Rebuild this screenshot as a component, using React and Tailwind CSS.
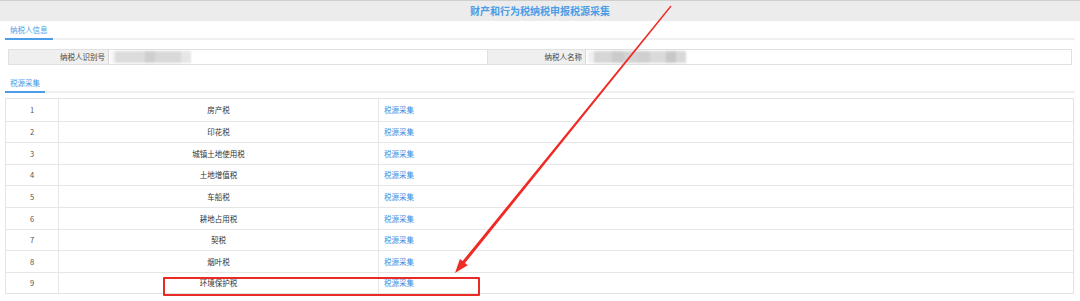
import React from 'react';

const taxes = [
  '房产税',
  '印花税',
  '城镇土地使用税',
  '土地增值税',
  '车船税',
  '耕地占用税',
  '契税',
  '烟叶税',
  '环境保护税'
];

const font = { fontFamily: '"Noto Sans CJK SC", "Noto Sans", sans-serif' };

function Tab({ label, height }) {
  return (
    <div className={`flex items-end border-b-2 border-[#f0f0f0] ${height}`}>
      <div className="-mb-[2px] border-b-2 border-[#4a9de6] px-[5px] pb-[3px] text-[7.5px] leading-[10px] text-[#4a9de6]">
        {label}
      </div>
    </div>
  );
}

function Blur({ width, tones }) {
  return (
    <div className="flex h-full items-center pl-[2px]" style={{ width }}>
      <div className="flex h-[12px] blur-[1px]">
        {tones.map((t, i) => (
          <div key={i} className="h-full" style={{ width: t[0], background: t[1] }} />
        ))}
      </div>
    </div>
  );
}

export default function App() {
  return (
    <div className="relative h-[301px] w-[1080px] overflow-hidden bg-white text-[#444]" style={font}>
      {/* Header */}
      <div className="flex h-[21px] items-center justify-center border-t border-[#cfcfcf] bg-[#ececec]">
        <span className="text-[10px] font-bold leading-none text-[#4a9de6]">财产和行为税纳税申报税源采集</span>
      </div>

      <div className="mx-[5px]">
        <Tab label="纳税人信息" height="h-[19px]" />

        {/* Taxpayer info */}
        <div className="mx-[3px] mt-[9px] grid h-[16px] grid-cols-[99px_379px_98px_1fr] border border-[#e0e0e0] text-[7.5px] leading-none">
          <div className="flex items-center justify-end bg-[#efefef] pr-[3px]">纳税人识别号</div>
          <div className="flex items-center border-l border-[#d8d8d8]">
            <Blur width={100} tones={[[4, '#f3f3f3'], [30, '#dcdcdc'], [10, '#cfcfcf'], [26, '#d9d9d9'], [10, '#e6e6e6']]} />
          </div>
          <div className="flex items-center justify-end border-l border-[#e0e0e0] bg-[#efefef] pr-[3px]">纳税人名称</div>
          <div className="flex items-center border-l border-[#d8d8d8]">
            <Blur width={120} tones={[[6, '#f0f0f0'], [18, '#d6d6d6'], [12, '#cbcbcb'], [14, '#d3d3d3'], [12, '#cfcfcf'], [16, '#dadada'], [10, '#c8c8c8'], [10, '#d9d9d9']]} />
          </div>
        </div>

        <Tab label="税源采集" height="h-[28px]" />

        {/* Tax source table */}
        <div className="mt-[5px] mr-[1px] border border-[#e3e3e3] text-[7.5px] leading-none">
          {taxes.map((name, i) => (
            <div
              key={name}
              className={`grid h-[21.6px] grid-cols-[52px_320px_1fr] ${i > 0 ? 'border-t border-[#e6e6e6]' : ''}`}
            >
              <div className="flex items-center justify-center text-[#555]">{i + 1}</div>
              <div className="flex items-center justify-center border-l border-[#e6e6e6] text-[#333]">{name}</div>
              <div className="flex items-center border-l border-[#e6e6e6] pl-[5px] text-[#3d8fe0]">税源采集</div>
            </div>
          ))}
        </div>
      </div>

      {/* Annotation overlay */}
      <div className="absolute left-[163px] top-[277px] h-[19px] w-[317px] rounded-[1px] border-2 border-[#ea2a25]" />
      <svg className="pointer-events-none absolute left-0 top-0" width="1080" height="301">
        <polygon
          points="670.5,5.6 671.5,6.4 465,263.1 467.7,265.25 455,273 459.9,258.95 462.6,261.1"
          fill="#ef2b25"
        />
      </svg>
    </div>
  );
}
